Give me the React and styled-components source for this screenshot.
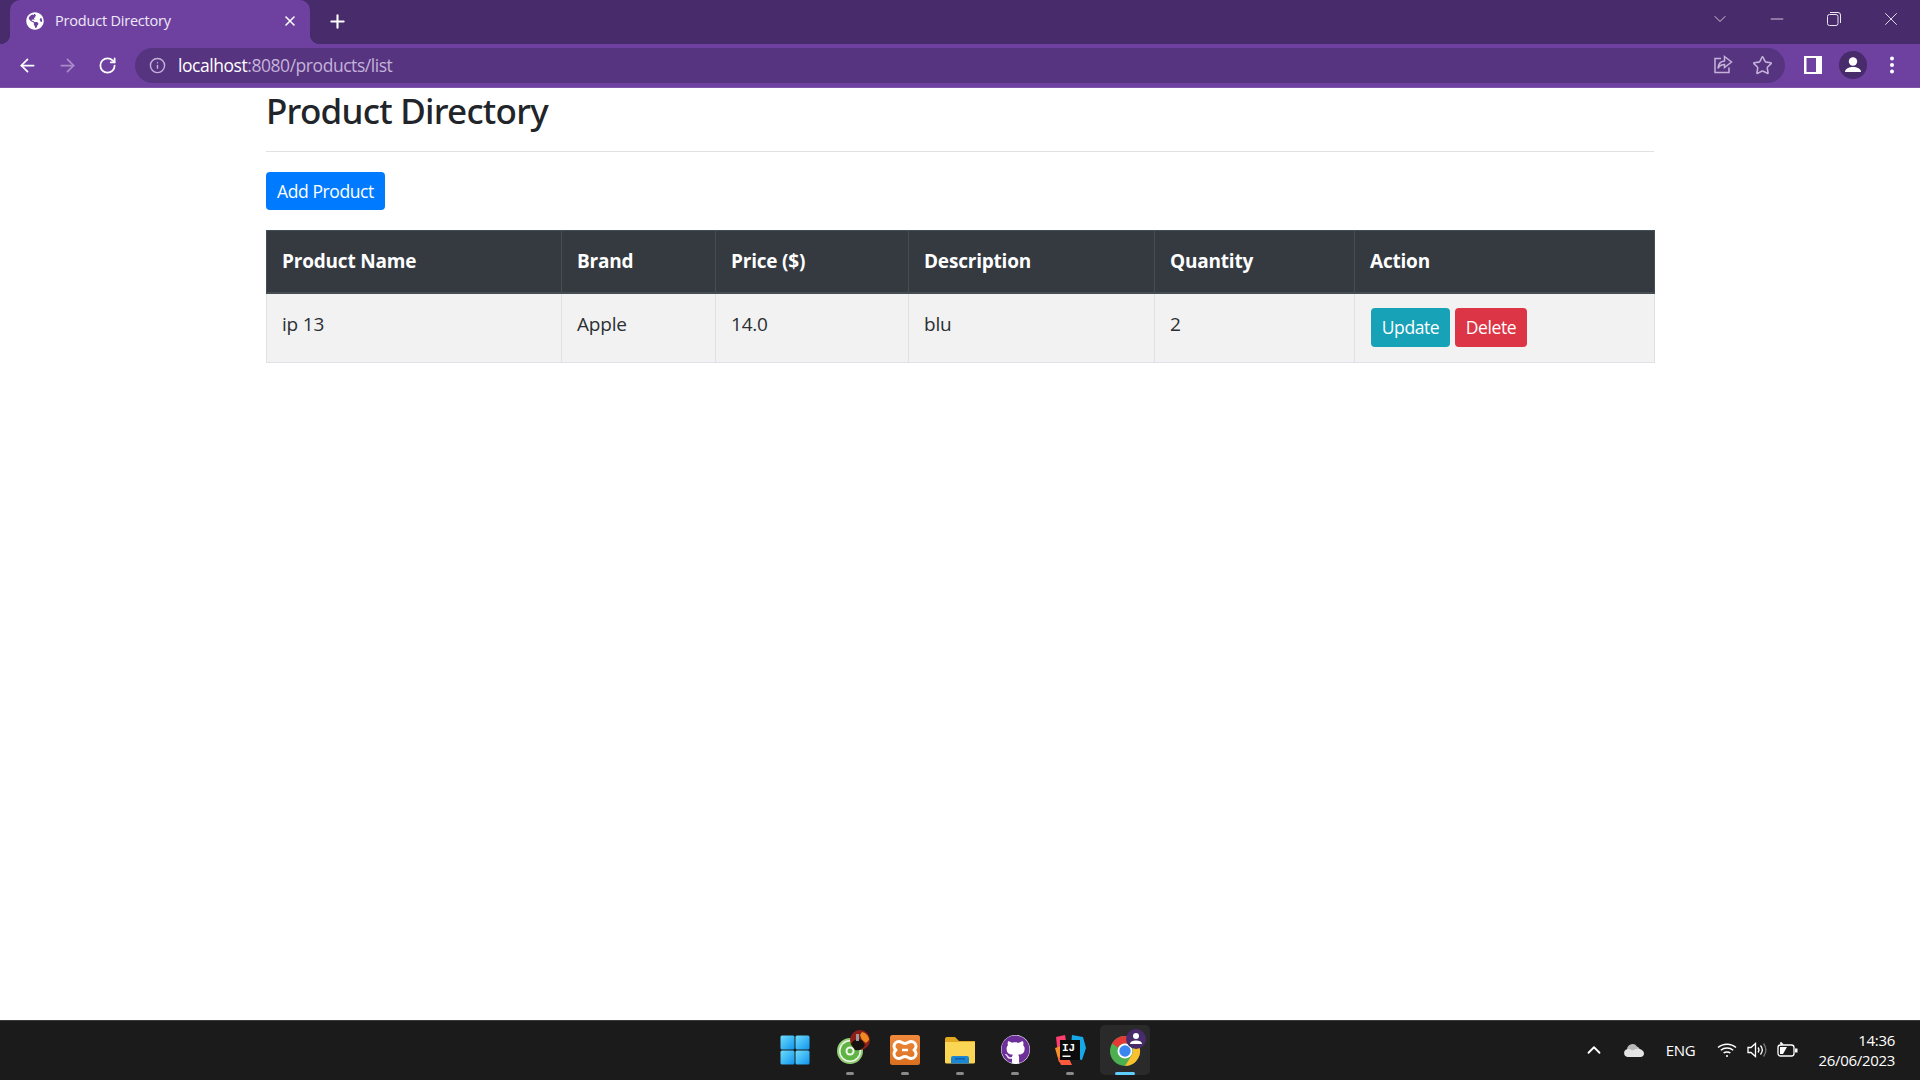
import React from 'react'
import styled, { createGlobalStyle } from 'styled-components'
import { FaGlobeAmericas, FaGithub } from 'react-icons/fa'
import { ArrowLeft, ArrowRight, RotateCw, Info, Star, X, Plus, ChevronDown, ChevronUp, Minus } from 'lucide-react'

const UI_FONT = '"Open Sans", "Noto Sans", "Liberation Sans", sans-serif'

const GlobalStyle = createGlobalStyle`
  html, body {
    margin: 0;
    padding: 0;
    height: 100%;
    background: #fff;
    font-family: ${UI_FONT};
  }
  #root { height: 100%; }
  * { box-sizing: border-box; }
`

const Screen = styled.div`
  display: flex;
  flex-direction: column;
  height: 1080px;
  overflow: hidden;
`

/* browser chrome */
const TabStrip = styled.div`
  display: flex;
  align-items: flex-end;
  height: 44px;
  padding-left: 10px;
  background: #472b6b;
`

const Tab = styled.div`
  position: relative;
  display: flex;
  align-items: center;
  width: 300px;
  height: 44px;
  padding: 0 12px 3px 16px;
  background: #6e41a1;
  border-radius: 10px 10px 0 0;
  color: #fff;

  &::before, &::after {
    content: '';
    position: absolute;
    bottom: 0;
    width: 10px;
    height: 10px;
  }
  &::before {
    left: -10px;
    background: radial-gradient(circle at 0 0, transparent 10px, #6e41a1 10.5px);
  }
  &::after {
    right: -10px;
    background: radial-gradient(circle at 100% 0, transparent 10px, #6e41a1 10.5px);
  }
`

const TabTitle = styled.span`
  flex: 1;
  margin-left: 11px;
  font-size: 14.5px;
  letter-spacing: -0.2px;
  color: #efe9f6;
`

const NewTab = styled.div`
  display: flex;
  align-items: center;
  margin: 0 0 2px 17px;
  height: 42px;
  color: #fff;
`

const WindowControls = styled.div`
  display: flex;
  align-items: center;
  align-self: flex-start;
  margin-left: auto;
  height: 38px;
  color: #ece7f2;
`

const WindowButton = styled.div`
  display: flex;
  align-items: center;
  justify-content: center;
  width: ${p => p.$w || 57}px;
`

const ToolBar = styled.div`
  display: flex;
  align-items: center;
  height: 44px;
  padding: 0 0 1px 7px;
  background: #6e41a1;
  border-bottom: 1px solid #7d55ab;
`

const NavButton = styled.div`
  display: flex;
  align-items: center;
  justify-content: center;
  width: 40px;
  color: ${p => (p.$muted ? '#a98cca' : '#fff')};
`

const Omnibox = styled.div`
  display: flex;
  align-items: center;
  flex: none;
  width: 1650px;
  height: 35px;
  margin-left: 8px;
  padding: 0 12px 0 14px;
  background: #573480;
  border-radius: 18px;
  color: #c4b2da;
`

const Url = styled.div`
  flex: 1;
  margin-left: 12px;
  padding-bottom: 1px;
  font-size: 17.5px;
  letter-spacing: -0.45px;
  color: #c4b2da;

  b {
    font-weight: 400;
    color: #fff;
  }
`

const OmniIcons = styled.div`
  display: flex;
  align-items: center;
  gap: 19px;
`

const ToolIcons = styled.div`
  display: flex;
  align-items: center;
  gap: 17px;
  margin-left: 19px;
`

const MenuDots = styled.div`
  display: flex;
  margin-left: 5px;
`

/* page */
const Main = styled.main`
  flex: 1;
`

const Container = styled.div`
  width: 1388px;
  margin: 0 auto;
`

const Heading = styled.h2`
  margin: 0;
  font-family: "Noto Sans", ${UI_FONT};
  font-size: 35px;
  font-weight: 500;
  line-height: 46px;
  letter-spacing: -0.75px;
  color: #212529;
`

const Divider = styled.hr`
  margin: 17px 0 20px;
  border: 0;
  border-top: 1px solid #e1e1e1;
`

const Button = styled.button`
  display: inline-flex;
  align-items: center;
  justify-content: center;
  height: ${p => p.$h || 39}px;
  width: ${p => p.$w}px;
  padding: 0;
  border: 0;
  border-radius: 4px;
  background: ${p => p.$bg};
  color: #fff;
  font-family: ${UI_FONT};
  font-size: 17.5px;
  letter-spacing: -0.4px;
`

const ProductTable = styled.table`
  width: 1388px;
  margin-top: 20px;
  table-layout: fixed;
  border-collapse: collapse;
  font-size: 19px;
  letter-spacing: -0.2px;
  color: #2b2f33;
`

const HeadCell = styled.th`
  height: 62px;
  padding: 0 15px;
  background: #343a40;
  border: 1px solid #454d55;
  border-bottom: 2px solid #454d55;
  color: #fff;
  font-weight: 700;
  font-size: 19px;
  letter-spacing: -0.2px;
  text-align: left;
`

const Cell = styled.td`
  height: 70px;
  padding: 17px 15px 0;
  background: #f2f2f2;
  border: 1px solid #dee2e6;
  vertical-align: top;
`

const Actions = styled.div`
  display: flex;
  gap: 5px;
  margin: -3px 0 0 1px;
`

/* taskbar */
const TaskBar = styled.footer`
  display: grid;
  grid-template-columns: 1fr auto 1fr;
  align-items: center;
  height: 60px;
  padding-bottom: 2px;
  background: #1b1b1b;
  border-top: 1px solid #3a3a3a;
`

const TaskIcons = styled.div`
  display: flex;
  align-items: center;
  grid-column: 2;
`

const TaskItem = styled.div`
  position: relative;
  display: flex;
  align-items: center;
  justify-content: center;
  width: 55px;
  height: 50px;

  ${p => p.$active && `
    width: 50px;
    margin: 0 2.5px;
    background: #2a2a2a;
    border-radius: 5px;
  `}

  &::after {
    content: '';
    display: ${p => (p.$running ? 'block' : 'none')};
    position: absolute;
    left: 50%;
    bottom: 0;
    width: ${p => (p.$active ? 20 : 8)}px;
    height: 3px;
    transform: translateX(-50%);
    border-radius: 2px;
    background: ${p => (p.$active ? '#60cdff' : '#8a8a8a')};
  }
`

const Tray = styled.div`
  display: flex;
  align-items: center;
  justify-content: flex-end;
  grid-column: 3;
  padding-right: 25px;
  color: #fff;
`

const CloudSlot = styled.div`
  display: flex;
  margin-left: 18px;
`

const TrayText = styled.span`
  margin: 0 22px 0 22px;
  font-size: 15px;
  letter-spacing: -0.3px;
`

const TrayIcons = styled.div`
  display: flex;
  align-items: center;
  gap: 10px;
`

const Clock = styled.div`
  margin-left: 20px;
  text-align: right;
  font-size: 15px;
  line-height: 20px;
  letter-spacing: -0.3px;
`

const ShareIcon = () => (
  <svg width="20" height="20" viewBox="0 0 20 20" fill="none" stroke="#c4b2da" strokeWidth="1.5">
    <path d="M8 3.5H2v14h14v-5" />
    <path d="M11.5 1.5 18.5 7l-7 5.5V9.5c-3 0-5 1-6.5 4 .2-4.500 2.500-7.200 6.500-7.500z" />
  </svg>
)

const PanelIcon = () => (
  <svg width="18" height="18" viewBox="0 0 18 18">
    <path fill="#fff" d="M0 0h18v18H0z" />
    <path fill="#6e41a1" d="M2.500 2h9.500v14H2.500z" />
  </svg>
)

const AvatarIcon = () => (
  <svg width="28" height="28" viewBox="0 0 28 28">
    <circle cx="14" cy="14" r="14" fill="#472b6b" />
    <circle cx="14" cy="10.500" r="4.200" fill="#fff" />
    <path fill="#fff" d="M6 21c0-3.500 4-5 8-5s8 1.500 8 5z" />
  </svg>
)

const DotsIcon = () => (
  <svg width="6" height="18" viewBox="0 0 6 18" fill="#fff">
    <circle cx="3" cy="2.500" r="2" />
    <circle cx="3" cy="9" r="2" />
    <circle cx="3" cy="15.500" r="2" />
  </svg>
)

const RestoreIcon = () => (
  <svg width="14" height="14" viewBox="0 0 14 14" fill="none" stroke="#ece7f2" strokeWidth="1">
    <rect x="0.500" y="2.500" width="10.500" height="11" rx="2" />
    <path d="M3 .5h8a2.500 2.500 0 0 1 2.500 2.500v8" />
  </svg>
)

const WindowsLogo = () => (
  <svg width="30" height="30" viewBox="0 0 30 30">
    <defs>
      <linearGradient id="win" x1="0" y1="0" x2="1" y2="1">
        <stop offset="0" stopColor="#6fdcfb" />
        <stop offset="1" stopColor="#0f95ee" />
      </linearGradient>
    </defs>
    <rect x="0.500" y="0.500" width="14" height="14" rx="1.500" fill="url(#win)" />
    <rect x="15.500" y="0.500" width="14" height="14" rx="1.500" fill="url(#win)" />
    <rect x="0.500" y="15.500" width="14" height="14" rx="1.500" fill="url(#win)" />
    <rect x="15.500" y="15.500" width="14" height="14" rx="1.500" fill="url(#win)" />
  </svg>
)

const GreenAppIcon = () => (
  <svg width="50" height="50" viewBox="0 0 50 50">
    <circle cx="25" cy="26" r="13" fill="#8fce72" />
    <circle cx="25" cy="26" r="11" fill="#f2f6ee" />
    <circle cx="25" cy="26" r="9.500" fill="#5fb544" />
    <circle cx="25" cy="26" r="4.500" fill="#f2f6ee" />
    <circle cx="25" cy="26" r="2.500" fill="#5fb544" />
    <circle cx="35" cy="15" r="10" fill="#8c1f1a" />
    <path fill="#ef8a22" d="M37 7c4 1 7 4 7 8l-3 3-4-3-2-5z" />
    <path fill="#17110f" d="M26 19c2-4 7-6 11-4l3 5c-2 4-6 6-10 5z" />
    <path fill="#9a9a9a" d="M31 9h3v7h-3z" />
  </svg>
)

const XamppIcon = () => (
  <svg width="30" height="30" viewBox="0 0 30 30">
    <defs>
      <linearGradient id="xampp" x1="0" y1="0" x2="0" y2="1">
        <stop offset="0" stopColor="#f0893c" />
        <stop offset="1" stopColor="#d9701f" />
      </linearGradient>
    </defs>
    <rect width="30" height="30" rx="2.500" fill="url(#xampp)" />
    <path
      fill="none"
      stroke="#fff"
      strokeWidth="3"
      strokeLinejoin="round"
      d="M9 6.500c2.500 0 3.500 2 6 2s3.500-2 6-2c3 0 5 2.500 5 5 0 2-2 3.500-2 3.500s2 1.500 2 3.500c0 2.500-2 5-5 5-2.500 0-3.500-2-6-2s-3.500 2-6 2c-3 0-5-2.500-5-5 0-2 2-3.500 2-3.500s-2-1.500-2-3.500c0-2.500 2-5 5-5z"
    />
    <path stroke="#fff" strokeWidth="2.500" d="M12 15h6" />
  </svg>
)

const FolderIcon = () => (
  <svg width="30" height="28" viewBox="0 0 30 28">
    <path fill="#e2a81f" d="M0 3a2 2 0 0 1 2-2h8l4 4h16v6H0z" />
    <path fill="#fbd654" d="M0 6h30v20a1.500 1.500 0 0 1-1.500 1.500h-27A1.500 1.500 0 0 1 0 26z" />
    <path fill="#1b86d3" d="M6 27.500V22a2 2 0 0 1 2-2h14a2 2 0 0 1 2 2v5.500z" />
    <path fill="#0f5fa8" d="M10 22h10v1.500H10z" />
  </svg>
)

const GithubBadge = styled.div`
  display: flex;
  border-radius: 50%;
  background: #fff;
  color: #6d2f9a;
  line-height: 0;
`

const IdeaIcon = () => (
  <svg width="32" height="32" viewBox="0 0 32 32">
    <path fill="#fc3f6f" d="M2 3l9-2 2 12-9 8z" />
    <path fill="#f58f2a" d="M1 14l9-3 4 19-9-2z" />
    <path fill="#ff5a3c" d="M4 24l8-6 6 13H7z" />
    <path fill="#17a8e8" d="M18 1l11 2 3 11-4 12-12-3z" />
    <rect x="6" y="6" width="20" height="20" fill="#0b0b0b" />
    <text x="8" y="17" fontFamily="Liberation Mono, monospace" fontSize="11" fontWeight="700" fill="#fff">IJ</text>
    <rect x="8.500" y="21.500" width="8" height="1.500" fill="#fff" />
  </svg>
)

const ChromeIcon = () => (
  <svg width="50" height="50" viewBox="0 0 50 50">
    <circle cx="25" cy="26" r="15" fill="#4caf50" />
    <path fill="#e53935" d="M12 18.500A15 15 0 0 1 38 18.500H25a8 8 0 0 0-7 4z" />
    <path fill="#fbc02d" d="M38 18.500A15 15 0 0 1 25 41l6.800-11A8 8 0 0 0 32 22z" />
    <circle cx="25" cy="26" r="7.500" fill="#fff" />
    <circle cx="25" cy="26" r="5.700" fill="#3a86f0" />
    <circle cx="36" cy="14" r="10" fill="#472b6b" />
    <circle cx="36" cy="11" r="3" fill="#fff" />
    <path fill="#fff" d="M30 19c0-2.500 3-3.500 6-3.500s6 1 6 3.500z" />
  </svg>
)

const CloudIcon = () => (
  <svg width="21" height="14" viewBox="0 0 21 14">
    <path fill="#b9b9b9" d="M4 6a5.500 5.500 0 0 1 10-2.500A5 5 0 0 1 17 7L8 9z" />
    <path fill="#e4e4e4" d="M4.500 14A4 4 0 0 1 4 6.200c2-.5 3.500 0 5 1.300L13 6c3-1 8 1 8 4.500 0 2-1.500 3.500-3.500 3.500z" />
  </svg>
)

const WifiIcon = () => (
  <svg width="20" height="16" viewBox="0 0 20 16" fill="none" stroke="#fff" strokeWidth="1.500">
    <path d="M1 5.500c5-4.500 13-4.500 18 0" />
    <path d="M3.800 8.300c3.500-3 9-3 12.400 0" />
    <path d="M6.600 11c1.800-1.500 5-1.500 6.800 0" />
    <circle cx="10" cy="14" r="1" fill="#fff" stroke="none" />
  </svg>
)

const VolumeIcon = () => (
  <svg width="20" height="16" viewBox="0 0 20 16" fill="none" stroke="#fff" strokeWidth="1.300">
    <path d="M1 5.500h3L8.500 1.500v13L4 10.500H1z" />
    <path d="M11 5.500c1.200 1.500 1.200 3.500 0 5" />
    <path d="M13.500 3.500c2.200 2.700 2.200 6.300 0 9" />
    <path stroke="#777" d="M16.500 1.500c3 4 3 9 0 13" />
  </svg>
)

const BatteryIcon = () => (
  <svg width="21" height="17" viewBox="0 0 21 17" fill="none" stroke="#fff" strokeWidth="1.300">
    <rect x="1" y="4" width="16" height="11" rx="2.500" />
    <path fill="#fff" stroke="none" d="M18 7.500h2.500v4H18zM3 6h7l-4 7H3z" />
    <path strokeWidth="1.500" d="M5 4 3.500 1.500 6 3.500" />
  </svg>
)

const App = () => {
  const rows = [{ name: 'ip 13', brand: 'Apple', price: '14.0', description: 'blu', quantity: '2' }]

  return (
    <Screen>
      <GlobalStyle />
      <TabStrip>
        <Tab>
          <FaGlobeAmericas size={18} color="#fff" />
          <TabTitle>Product Directory</TabTitle>
          <X size={16} strokeWidth={2.4} />
        </Tab>
        <NewTab>
          <Plus size={21} strokeWidth={2.4} />
        </NewTab>
        <WindowControls>
          <WindowButton><ChevronDown size={20} strokeWidth={1} /></WindowButton>
          <WindowButton><Minus size={20} strokeWidth={1} /></WindowButton>
          <WindowButton><RestoreIcon /></WindowButton>
          <WindowButton $w={58}><X size={22} strokeWidth={1} /></WindowButton>
        </WindowControls>
      </TabStrip>

      <ToolBar>
        <NavButton><ArrowLeft size={21} strokeWidth={2} /></NavButton>
        <NavButton $muted><ArrowRight size={21} strokeWidth={2} /></NavButton>
        <NavButton><RotateCw size={19} strokeWidth={2.2} /></NavButton>
        <Omnibox>
          <Info size={17} strokeWidth={2} />
          <Url><b>localhost</b>:8080/products/list</Url>
          <OmniIcons>
            <ShareIcon />
            <Star size={21} strokeWidth={1.8} />
          </OmniIcons>
        </Omnibox>
        <ToolIcons>
          <PanelIcon />
          <AvatarIcon />
          <MenuDots><DotsIcon /></MenuDots>
        </ToolIcons>
      </ToolBar>

      <Main>
        <Container>
          <Heading>Product Directory</Heading>
          <Divider />
          <Button $bg="#007bff" $w={119} $h={38}>Add Product</Button>
          <ProductTable>
            <colgroup>
              <col style={{ width: 295 }} />
              <col style={{ width: 154 }} />
              <col style={{ width: 193 }} />
              <col style={{ width: 246 }} />
              <col style={{ width: 200 }} />
              <col style={{ width: 300 }} />
            </colgroup>
            <thead>
              <tr>
                <HeadCell>Product Name</HeadCell>
                <HeadCell>Brand</HeadCell>
                <HeadCell>Price ($)</HeadCell>
                <HeadCell>Description</HeadCell>
                <HeadCell>Quantity</HeadCell>
                <HeadCell>Action</HeadCell>
              </tr>
            </thead>
            <tbody>
              {rows.map(row => (
                <tr key={row.name}>
                  <Cell>{row.name}</Cell>
                  <Cell>{row.brand}</Cell>
                  <Cell>{row.price}</Cell>
                  <Cell>{row.description}</Cell>
                  <Cell>{row.quantity}</Cell>
                  <Cell>
                    <Actions>
                      <Button $bg="#17a2b8" $w={79}>Update</Button>
                      <Button $bg="#dc3545" $w={72}>Delete</Button>
                    </Actions>
                  </Cell>
                </tr>
              ))}
            </tbody>
          </ProductTable>
        </Container>
      </Main>

      <TaskBar>
        <TaskIcons>
          <TaskItem><WindowsLogo /></TaskItem>
          <TaskItem $running><GreenAppIcon /></TaskItem>
          <TaskItem $running><XamppIcon /></TaskItem>
          <TaskItem $running><FolderIcon /></TaskItem>
          <TaskItem $running><GithubBadge><FaGithub size={29} /></GithubBadge></TaskItem>
          <TaskItem $running><IdeaIcon /></TaskItem>
          <TaskItem $running $active><ChromeIcon /></TaskItem>
        </TaskIcons>
        <Tray>
          <ChevronUp size={22} strokeWidth={2} />
          <CloudSlot><CloudIcon /></CloudSlot>
          <TrayText>ENG</TrayText>
          <TrayIcons>
            <WifiIcon />
            <VolumeIcon />
            <BatteryIcon />
          </TrayIcons>
          <Clock>
            <div>14:36</div>
            <div>26/06/2023</div>
          </Clock>
        </Tray>
      </TaskBar>
    </Screen>
  )
}

export default App
